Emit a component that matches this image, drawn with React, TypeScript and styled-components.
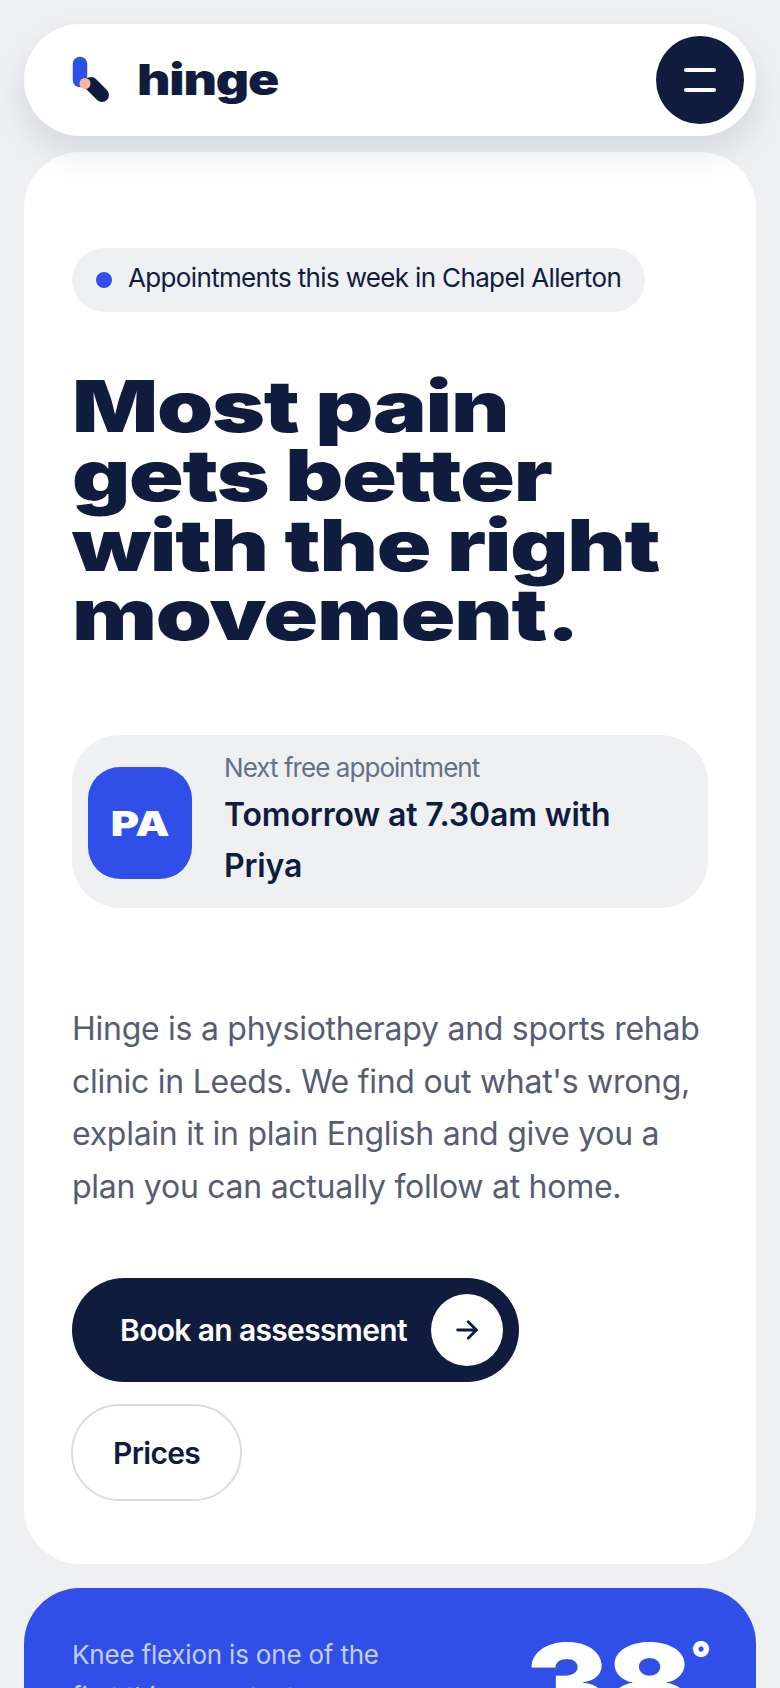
import styled, { createGlobalStyle } from 'styled-components'

const navy = '#0f1c3d'
const blue = '#304fe8'
const mist = '#eef0f2'
const font = "Inter, 'Liberation Sans', Arial, sans-serif"

const GlobalStyle = createGlobalStyle`
  * {
    box-sizing: border-box;
  }
  html,
  body {
    margin: 0;
    height: 1688px;
    overflow: hidden;
    background: ${mist};
  }
  body {
    font-family: ${font};
    color: ${navy};
  }
`

const Page = styled.main`
  height: 1688px;
  overflow: hidden;
  padding: 24px;
  display: flex;
  flex-direction: column;
`

const Header = styled.header`
  position: relative;
  z-index: 2;
  flex: none;
  height: 112px;
  margin-bottom: 16px;
  padding: 0 12px 0 48px;
  display: flex;
  align-items: center;
  justify-content: space-between;
  background: #fff;
  border-radius: 56px;
  box-shadow: 0 16px 32px rgba(15, 28, 61, 0.11);
`

const Brand = styled.a`
  display: flex;
  align-items: center;
  gap: 27px;
`

const Wordmark = styled.span`
  width: 130px;
  margin-bottom: 3px;
  font-weight: 900;
  font-size: 43px;
  line-height: 56px;
  letter-spacing: -1px;
  transform: scaleX(1.2);
  transform-origin: left center;
`

const MenuButton = styled.button`
  width: 88px;
  height: 88px;
  padding: 0;
  border: 0;
  border-radius: 50%;
  background: ${navy};
  display: flex;
  flex-direction: column;
  align-items: center;
  justify-content: center;
  gap: 16px;

  span {
    width: 32px;
    height: 4px;
    border-radius: 2px;
    background: #fff;
  }
`

const Hero = styled.section`
  flex: none;
  height: 1412px;
  margin-bottom: 24px;
  padding: 96px 48px 64px;
  background: #fff;
  border-radius: 56px;
`

const Pill = styled.div`
  display: inline-flex;
  align-items: center;
  gap: 16px;
  height: 64px;
  padding: 0 24px;
  background: ${mist};
  border-radius: 32px;
  font-size: 26px;
  letter-spacing: -0.65px;

  span {
    margin-bottom: 6px;
  }
`

const Dot = styled.i`
  width: 16px;
  height: 16px;
  border-radius: 50%;
  background: ${blue};
`

const Title = styled.h1`
  margin: 60px 0 0;
  font-weight: 900;
  font-size: 71px;
  line-height: 69.3px;
  letter-spacing: -1px;
  white-space: nowrap;
  transform: scaleX(1.27);
  transform-origin: left center;
`

const NextSlot = styled.div`
  margin-top: 86px;
  padding: 12px 16px 17px;
  display: flex;
  align-items: center;
  gap: 32px;
  background: ${mist};
  border-radius: 48px;
`

const Avatar = styled.div`
  flex: none;
  width: 104px;
  height: 112px;
  margin-top: 8px;
  display: flex;
  align-items: center;
  justify-content: center;
  background: ${blue};
  border-radius: 32px;
  color: #fff;
  font-weight: 900;
  font-size: 34px;

  span {
    transform: scaleX(1.27);
  }
`

const SlotText = styled.div`
  width: 410px;
`

const SlotLabel = styled.div`
  font-size: 26px;
  line-height: 42px;
  letter-spacing: -0.95px;
  color: #667085;
`

const SlotTime = styled.div`
  font-size: 32px;
  line-height: 51px;
  font-weight: 600;
  letter-spacing: -0.15px;
`

const Intro = styled.p`
  margin: 95px 0 0;
  font-size: 32px;
  line-height: 52.5px;
  letter-spacing: -0.27px;
  color: #565d73;
`

const Actions = styled.div`
  margin-top: 65px;
  display: flex;
  flex-direction: column;
  align-items: flex-start;
  gap: 22px;
`

const BookButton = styled.a`
  height: 104px;
  padding: 0 16px 0 48px;
  display: flex;
  align-items: center;
  gap: 24px;
  background: ${navy};
  border-radius: 52px;
  color: #fff;
  font-size: 30px;
  font-weight: 600;
  letter-spacing: -0.65px;
`

const ArrowDisc = styled.span`
  width: 72px;
  height: 72px;
  display: flex;
  align-items: center;
  justify-content: center;
  background: #fff;
  border-radius: 50%;
  color: ${navy};
`

const PricesButton = styled.a`
  height: 97px;
  padding: 0 40px;
  margin-left: -1px;
  display: flex;
  align-items: center;
  border: 2px solid #dcdcdc;
  border-radius: 49px;
  font-size: 30px;
  font-weight: 600;
  letter-spacing: -0.65px;
`

const Stat = styled.section`
  flex: none;
  height: 300px;
  padding: 46px 45px 0 48px;
  display: flex;
  justify-content: space-between;
  background: ${blue};
  border-radius: 56px;
`

const StatText = styled.p`
  margin: 0;
  width: 340px;
  font-size: 26px;
  line-height: 42px;
  letter-spacing: -0.2px;
  color: rgba(255, 255, 255, 0.72);
`

const StatNumber = styled.div`
  display: flex;
  align-items: flex-start;
  margin-top: -10px;
  color: #fff;
  font-weight: 900;
`

const StatDigits = styled.span`
  font-size: 112px;
  line-height: 120px;
  letter-spacing: -2px;
  transform: scaleX(1.12);
  transform-origin: right center;
`

const StatUnit = styled.span`
  margin: 11px 0 0 1px;
  font-size: 44px;
  line-height: 44px;
`

const Logo = () => (
  <svg width="38" height="48" viewBox="0 0 38 48" aria-hidden="true">
    <line x1="8" y1="8" x2="8" y2="24" stroke={blue} strokeWidth="14.5" strokeLinecap="round" />
    <line x1="19" y1="28" x2="30" y2="39" stroke={navy} strokeWidth="14" strokeLinecap="round" />
    <circle cx="13" cy="27.5" r="5.5" fill="#fbb4a0" />
  </svg>
)

const Arrow = () => (
  <svg width="28" height="28" viewBox="0 0 24 24" fill="none" stroke="currentColor" strokeWidth="2.4" strokeLinecap="round" strokeLinejoin="round" aria-hidden="true">
    <path d="M4 12h16" />
    <path d="M13 5l7 7-7 7" />
  </svg>
)

export default function App() {
  return (
    <>
      <GlobalStyle />
      <Page>
        <Header>
          <Brand>
            <Logo />
            <Wordmark>hinge</Wordmark>
          </Brand>
          <MenuButton aria-label="Menu">
            <span />
            <span />
          </MenuButton>
        </Header>
        <Hero>
          <Pill>
            <Dot />
            <span>Appointments this week in Chapel Allerton</span>
          </Pill>
          <Title>
            Most pain
            <br />
            gets better
            <br />
            with the right
            <br />
            movement.
          </Title>
          <NextSlot>
            <Avatar>
              <span>PA</span>
            </Avatar>
            <SlotText>
              <SlotLabel>Next free appointment</SlotLabel>
              <SlotTime>Tomorrow at 7.30am with Priya</SlotTime>
            </SlotText>
          </NextSlot>
          <Intro>
            Hinge is a physiotherapy and sports rehab clinic in Leeds. We find out what's wrong,
            explain it in plain English and give you a plan you can actually follow at home.
          </Intro>
          <Actions>
            <BookButton>
              Book an assessment
              <ArrowDisc>
                <Arrow />
              </ArrowDisc>
            </BookButton>
            <PricesButton>Prices</PricesButton>
          </Actions>
        </Hero>
        <Stat>
          <StatText>Knee flexion is one of the first things we test</StatText>
          <StatNumber>
            <StatDigits>38</StatDigits>
            <StatUnit>°</StatUnit>
          </StatNumber>
        </Stat>
      </Page>
    </>
  )
}
